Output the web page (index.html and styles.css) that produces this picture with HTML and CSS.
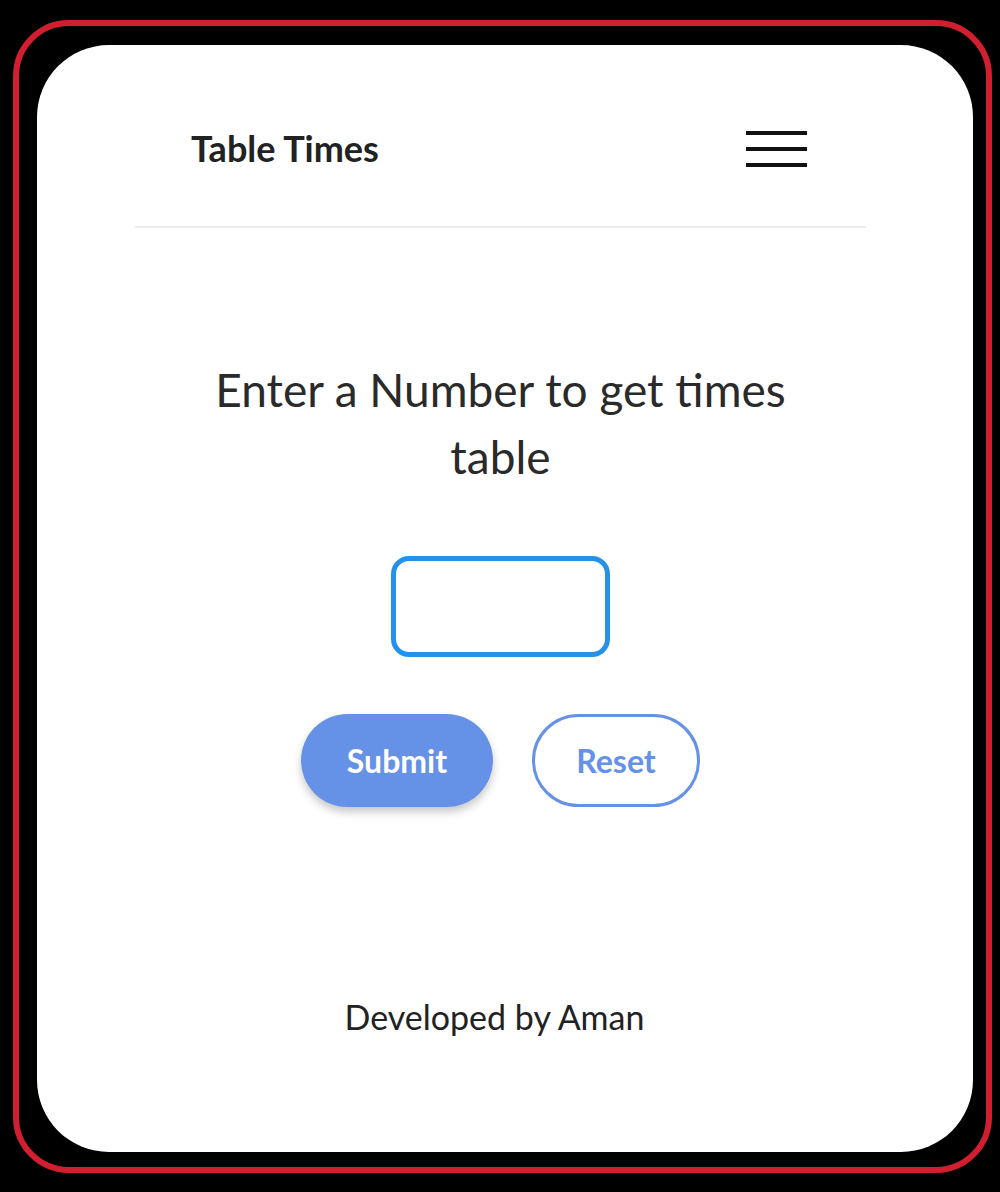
FILE: index.html
```html
<!DOCTYPE html>
<html lang="en">
<head>
<meta charset="utf-8">
<title>Table Times</title>
<link rel="stylesheet" href="styles.css">
</head>
<body>
<div class="frame">
  <div class="card">
    <div class="inner">
      <header class="header">
        <div class="brand">Table Times</div>
        <div class="burger" aria-label="menu">
          <span></span><span></span><span></span>
        </div>
      </header>
      <main class="main">
        <h1 class="title">Enter a Number to get times table</h1>
        <input class="num" type="text" aria-label="number">
        <div class="actions">
          <button class="btn submit">Submit</button>
          <button class="btn reset">Reset</button>
        </div>
      </main>
      <footer class="footer">Developed by Aman</footer>
    </div>
  </div>
</div>
</body>
</html>
```

FILE: styles.css
```css
html, body {
  margin: 0;
  padding: 0;
  background: #000;
}
body {
  font-family: Lato, "Open Sans", sans-serif;
  color: #222;
}
.frame {
  margin: 20px 8px 19px 13px;
  border: 6px solid #d21f30;
  border-radius: 56px;
  padding: 19px 13px 15px 18px;
  box-sizing: border-box;
  width: 979px;
  height: 1153px;
}
.card {
  background: #fff;
  border-radius: 72px;
  height: 100%;
  box-sizing: border-box;
  padding: 27px 107px 0 98px;
}
.inner {
  display: flex;
  flex-direction: column;
  align-items: stretch;
}
.header {
  height: 154px;
  border-bottom: 2px solid #ececec;
  display: flex;
  align-items: center;
  justify-content: space-between;
  padding: 0 59px 0 56px;
}
.brand {
  font-weight: 700;
  font-size: 36px;
  color: #222;
  margin-top: -2px;
}
.burger {
  width: 61px;
  display: flex;
  flex-direction: column;
  gap: 12px;
}
.burger span {
  display: block;
  height: 4px;
  background: #111;
}
.main {
  display: flex;
  flex-direction: column;
  align-items: center;
  padding-top: 128px;
}
.title {
  margin: 0;
  font-weight: 400;
  font-size: 46px;
  line-height: 67px;
  text-align: center;
  color: #2a2a2a;
  width: 600px;
}
.num {
  margin-top: 66px;
  width: 219px;
  height: 101px;
  box-sizing: border-box;
  border: 5px solid #2591e8;
  border-radius: 18px;
  outline: none;
  background: #fff;
}
.actions {
  margin-top: 57px;
  display: flex;
  gap: 39px;
}
.btn {
  font-family: inherit;
  font-weight: 700;
  font-size: 32px;
  height: 93px;
  border-radius: 47px;
  box-sizing: border-box;
  cursor: pointer;
}
.submit {
  width: 192px;
  background: #6592e6;
  color: #fff;
  border: none;
  box-shadow: 0 5px 8px rgba(0, 0, 0, 0.22);
}
.reset {
  width: 168px;
  background: #fff;
  color: #6592e6;
  border: 3px solid #6592e6;
}
.footer {
  margin-top: 189px;
  padding-right: 12px;
  text-align: center;
  font-size: 34px;
  color: #222;
}
```
